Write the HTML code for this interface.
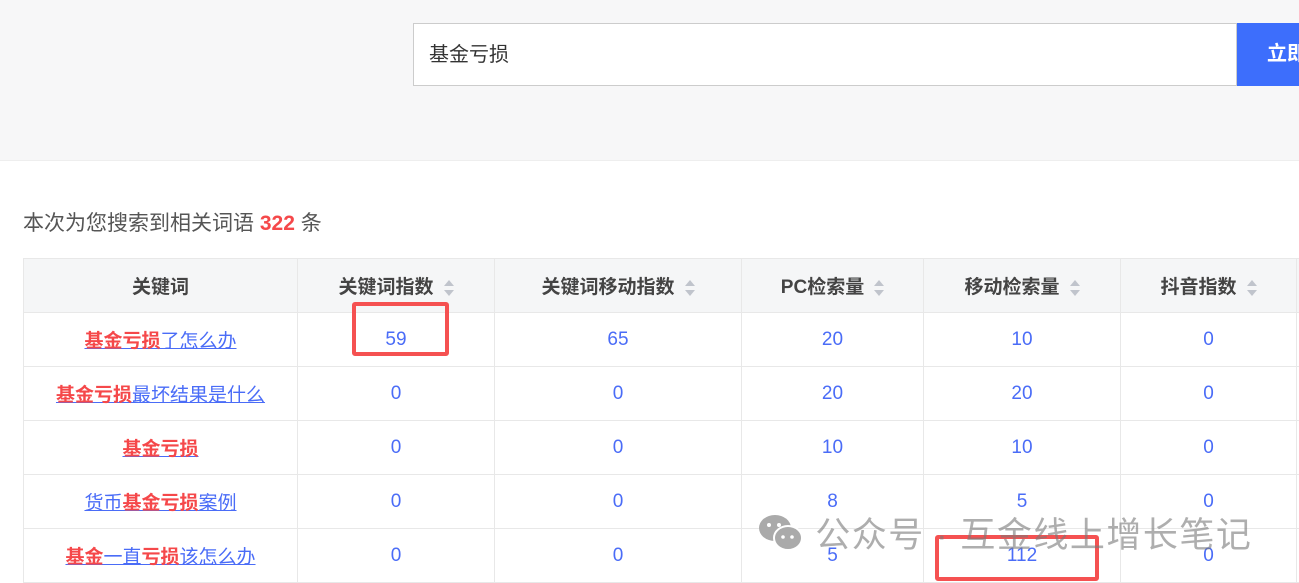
<html><head><style>
body{margin:0;width:1299px;height:582px;overflow:hidden;background:#fff;font-family:"Liberation Sans","Noto Sans CJK SC",sans-serif;position:relative}
.top{position:absolute;left:0;top:0;width:1299px;height:160px;background:#f7f7f8;border-bottom:1px solid #eee}
.inp{position:absolute;left:413px;top:23px;width:824px;height:63px;border:1px solid #ccc;background:#fff;font-size:20px;color:#333;line-height:63px;padding-left:15px;box-sizing:border-box}
.btn{position:absolute;left:1237px;top:23px;width:70px;height:63px;background:#3d6efc;color:#fff;font-weight:bold;font-size:20px;line-height:63px;padding-left:30px;box-sizing:border-box}
.cnt{position:absolute;left:23px;top:207px;font-size:21px;color:#555}
.cnt b{color:#f5484a}
table{position:absolute;left:23px;top:258px;border-collapse:collapse;font-size:19px;table-layout:fixed;width:1303px}
td,th{border:1px solid #e8e8e8;height:54px;text-align:center;padding:0;color:#4a6cf7;box-sizing:border-box}
th{background:#f5f6f7;color:#444;font-weight:bold;height:54px}
.s{display:inline-block;margin-left:10px;vertical-align:middle;width:10px;height:16px;position:relative}
.s:before,.s:after{content:"";position:absolute;left:0;border-left:5px solid transparent;border-right:5px solid transparent}
.s:before{top:0;border-bottom:6px solid #c0c4cc}.s:after{bottom:0;border-top:6px solid #c0c4cc}
a{color:#4a6cf7;text-decoration:underline}
a b{color:#f5484a}
.box{position:absolute;border:4px solid #f55151;border-radius:3px}
.wm{position:absolute;left:758px;top:507px;font-size:35px;color:rgba(120,120,120,.6);letter-spacing:1.5px;white-space:nowrap}
</style></head><body>
<div class="top"></div>
<div class="inp">基金亏损</div><div class="btn">立即</div>
<div class="cnt">本次为您搜索到相关词语 <b>322</b> 条</div>
<table>
<colgroup><col style="width:274px"><col style="width:197px"><col style="width:247px"><col style="width:182px"><col style="width:197px"><col style="width:176px"><col style="width:30px"></colgroup>
<tr><th>关键词</th><th>关键词指数<span class="s"></span></th><th>关键词移动指数<span class="s"></span></th><th>PC检索量<span class="s"></span></th><th>移动检索量<span class="s"></span></th><th>抖音指数<span class="s"></span></th><th></th></tr>
<tr><td><a><b>基金亏损</b>了怎么办</a></td><td>59</td><td>65</td><td>20</td><td>10</td><td>0</td><td></td></tr>
<tr><td><a><b>基金亏损</b>最坏结果是什么</a></td><td>0</td><td>0</td><td>20</td><td>20</td><td>0</td><td></td></tr>
<tr><td><a><b>基金亏损</b></a></td><td>0</td><td>0</td><td>10</td><td>10</td><td>0</td><td></td></tr>
<tr><td><a>货币<b>基金亏损</b>案例</a></td><td>0</td><td>0</td><td>8</td><td>5</td><td>0</td><td></td></tr>
<tr><td><a><b>基金</b>一直<b>亏损</b>该怎么办</a></td><td>0</td><td>0</td><td>5</td><td>112</td><td>0</td><td></td></tr>
</table>
<div class="box" style="left:352px;top:302px;width:89px;height:46px"></div>
<div class="box" style="left:935px;top:535px;width:156px;height:38px"></div>
<div class="wm"><svg width="46" height="40" viewBox="0 0 46 40" style="vertical-align:-6px"><ellipse cx="17" cy="15" rx="16" ry="13" fill="#aaa"/><ellipse cx="30" cy="25" rx="14" ry="12" fill="#aaa" stroke="#fff" stroke-width="2"/><circle cx="11" cy="12" r="2" fill="#fff"/><circle cx="21" cy="12" r="2" fill="#fff"/><circle cx="25" cy="24" r="1.8" fill="#fff"/><circle cx="34" cy="24" r="1.8" fill="#fff"/></svg> 公众号 · 互金线上增长笔记</div>
</body></html>
